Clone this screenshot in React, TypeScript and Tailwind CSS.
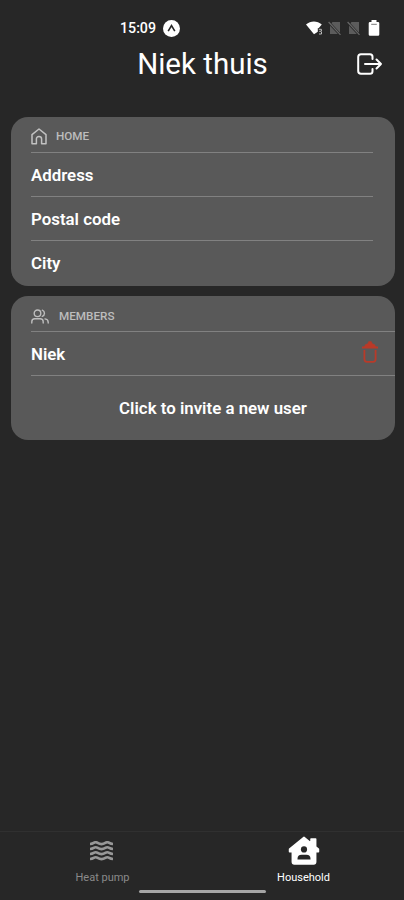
import React from 'react';

const fields = ['Address', 'Postal code', 'City'];

const StatusBar = () => (
  <div className="h-[42px] pt-[14px] pl-[120px] pr-[24px] flex items-center">
    <span className="pt-px text-[14.2px] leading-none font-medium">15:09</span>
    <svg className="ml-[7px] w-[17px] h-[17px]" viewBox="0 0 17 17">
      <circle cx="8.5" cy="8.5" r="8.5" fill="#fff" />
      <path d="M5.2 11.2 8.5 5.6l3.3 5.6" fill="none" stroke="#272727" strokeWidth="1.6" />
    </svg>
    <svg className="ml-auto w-[17px] h-[14px]" viewBox="0 0 17 14">
      <path d="M0 3.4C4.6-.6 11.2-.6 15.8 3.4L12.6 7.2v3L8 13.2z" fill="#fff" />
      <path d="M11.8 7.2h5V14h-5z" fill="#272727" />
      <path d="M12.8 8.3h2.6v2h-2.2M13 13h2.5v-2" fill="none" stroke="#bbb" strokeWidth="1" />
    </svg>
    <NoSim className="ml-[5px]" />
    <NoSim className="ml-[6px]" />
    <svg className="ml-[8px] w-[12px] h-[16px]" viewBox="0 0 12 16">
      <path d="M3.5 0h5v2H10q1.3 0 1.3 1.3v11.2q0 1.3-1.3 1.3H2Q.7 15.8.7 14.5V3.3Q.7 2 2 2h1.5z" fill="#fff" />
      <path d="M3.2 4.3h5.6" stroke="#777" strokeWidth="1" />
    </svg>
  </div>
);

const NoSim = ({ className }: { className: string }) => (
  <svg className={`${className} w-[13px] h-[14px]`} viewBox="0 0 13 14">
    <path d="M4.5 1H12v12H2V4z" fill="#5c5c5c" />
    <path d="M0 .5 12.5 14" stroke="#272727" strokeWidth="2.6" />
    <path d="M.6 1 12.5 13.8" stroke="#686868" strokeWidth="1.2" />
  </svg>
);

const LogoutIcon = () => (
  <svg className="w-[27px] h-[24px]" viewBox="0 0 27 24" fill="none" stroke="#fff" strokeWidth="2" strokeLinecap="round" strokeLinejoin="round">
    <path d="M16.5 7V4.8Q16.5 2.2 14 2.2H5q-2.8 0-2.8 2.8v14q0 2.8 2.8 2.8h9q2.5 0 2.5-2.6V17M9 12h16M20.5 7.5 25 12l-4.5 4.5" />
  </svg>
);

const HomeIcon = () => (
  <svg className="w-[16px] h-[17px]" viewBox="0 0 16 17" fill="none" stroke="#c2c2c2" strokeWidth="1.5" strokeLinejoin="round">
    <path d="M1 6.7 8 1l7 5.7v9.1h-4.4V11Q10.6 8.6 8 8.6T5.4 11v4.8H1z" />
  </svg>
);

const MembersIcon = () => (
  <svg className="w-[18px] h-[15px]" viewBox="0 0 18 15" fill="none" stroke="#bdbdbd" strokeWidth="1.4" strokeLinecap="round">
    <circle cx="6.5" cy="4.3" r="3.3" />
    <path d="M.8 14v-1.2Q.8 9.8 3.8 9.8h5.4q3 0 3 3V14M11.3 1.2a3.3 3.3 0 0 1 0 6.200M14 9.9q3.2.5 3.2 3.3V14" />
  </svg>
);

const TrashIcon = () => (
  <svg className="w-[16px] h-[22px]" viewBox="0 0 16 22" fill="none" stroke="#b93a29" strokeWidth="1.8">
    <path d="M0 6.5h16M2.4 9v9q0 2.8 2.6 2.8h6q2.600 0 2.600-2.800V9" />
    <path d="M1.800 6.500 3.500 3.600l2.200-.8L6.700.6h2.600l1 2.200 2.200.8 1.700 2.900z" fill="#b93a29" strokeWidth=".5" />
  </svg>
);

const WavesIcon = () => (
  <svg className="w-[23px] h-[20px]" viewBox="0 0 23 20" fill="none" stroke="#979797" strokeWidth="2.6">
    {[2, 7, 12, 17].map((y) => (
      <path key={y} d={`M0 ${y + 1}q2.200-.1 3.700-1.100 2-1.300 4 0 3.800 2.400 7.600 0 2-1.300 4 0 1.500 1 3.700 1.100`} />
    ))}
  </svg>
);

const HouseholdIcon = () => (
  <svg className="w-[32px] h-[29px]" viewBox="0 0 31 28">
    <path
      d="M15.5 1.3 1.5 12.7v2.5h2.7V25q0 2 2 2h18.6q2 0 2-2v-9.8h2.7v-2.5l-2.7-2.2V2.8h-4.5v4z"
      fill="#fff"
      stroke="#fff"
      strokeWidth="1.5"
      strokeLinejoin="round"
    />
    <circle cx="15.5" cy="13" r="3" fill="#272727" />
    <path d="M9.2 22.8v-.8q0-3.8 4-3.8h4.6q4 0 4 3.8v.8z" fill="#272727" />
  </svg>
);

const App = () => {
  return (
    <div className="w-[404px] h-[900px] bg-[#272727] text-white font-[Roboto,sans-serif] flex flex-col overflow-hidden">
      <StatusBar />
      <header className="h-[44px] grid grid-cols-[1fr_auto_1fr] items-center pr-[21px] pl-[22px]">
        <h1 className="col-start-2 text-[29.5px] leading-[44px]">Niek thuis</h1>
        <div className="justify-self-end">
          <LogoutIcon />
        </div>
      </header>

      <main className="flex-1 pt-[31px] pl-[11px] pr-[9px]">
        <section className="h-[169px] rounded-[17px] bg-[#595959] pl-[20px] pr-[22px]">
          <div className="h-[35px] pt-[4px] flex items-center gap-[9px] text-[11.7px] font-medium text-[#bdbdbd]">
            <HomeIcon />
            <span className="pt-px">HOME</span>
          </div>
          {fields.map((field) => (
            <div key={field} className="h-[44px] pt-[3px] border-t border-[#818181] flex items-center text-[16.85px] font-semibold">
              {field}
            </div>
          ))}
        </section>

        <section className="mt-[10px] h-[144px] rounded-[17px] bg-[#595959] pl-[20px]">
          <div className="h-[35px] pt-[6px] flex items-center gap-[10px] text-[11.7px] font-medium text-[#bdbdbd]">
            <MembersIcon />
            <span>MEMBERS</span>
          </div>
          <div className="h-[44px] pr-[17px] border-t border-[#818181] flex items-center justify-between text-[16.85px] font-semibold">
            <span className="pt-[3px]">Niek</span>
            <div className="pb-[3px]">
              <TrashIcon />
            </div>
          </div>
          <div className="h-[65px] pt-[2px] border-t border-[#818181] flex items-center justify-center text-[16.85px] font-semibold">
            Click to invite a new user
          </div>
        </section>
      </main>

      <nav className="h-[69px] border-t border-[#303030] flex flex-col">
        <div className="h-[54px] pl-[2px] grid grid-cols-2 text-[11px] leading-[13px]">
          <div className="flex flex-col items-center text-[#8a8a8a]">
            <div className="h-[39px] pt-[9px] pr-[2px]">
              <WavesIcon />
            </div>
            <span>Heat pump</span>
          </div>
          <div className="flex flex-col items-center">
            <div className="h-[39px] pt-[4px]">
              <HouseholdIcon />
            </div>
            <span>Household</span>
          </div>
        </div>
        <div className="mt-[4px] w-[127px] h-[3px] rounded-full bg-[#a5a5a5] self-center" />
      </nav>
    </div>
  );
};

export default App;
